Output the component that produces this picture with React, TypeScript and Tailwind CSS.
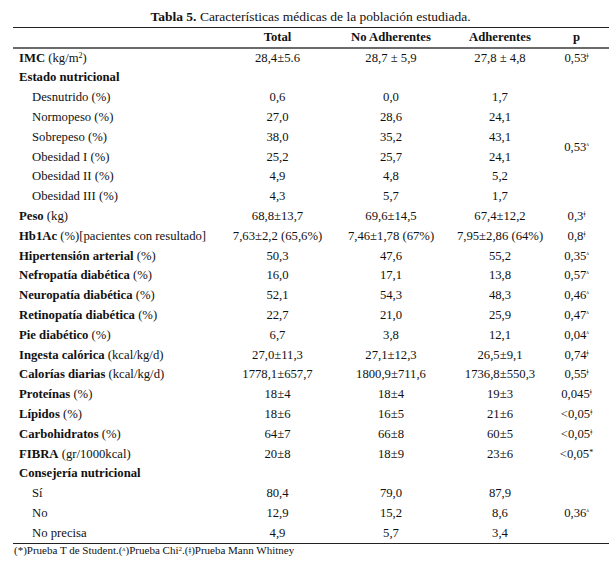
const MW = "ǂ";
const CHI = "ᶺ";

type Row = {
  label: React.ReactNode;
  indent?: boolean;
  total?: string;
  no?: string;
  adh?: string;
  p?: React.ReactNode;
  span?: number;
  skipP?: boolean;
};

function P({ v, m }: { v: string; m: string }) {
  return (
    <span>
      {v}
      <span className="text-[8px] relative top-[-3px]">{m}</span>
    </span>
  );
}

function L({ b, n }: { b: string; n?: string }) {
  return (
    <>
      <span className="font-bold">{b}</span>
      {n ? <span> {n}</span> : null}
    </>
  );
}

const rows: Row[] = [
  {
    label: (
      <>
        <span className="font-bold">IMC</span> (kg/m<span className="text-[8px] relative top-[-4px]">2</span>)
      </>
    ),
    total: "28,4±5.6",
    no: "28,7 ± 5,9",
    adh: "27,8 ± 4,8",
    p: <P v="0,53" m={MW} />,
  },
  { label: <L b="Estado nutricional" /> },
  { label: "Desnutrido (%)", indent: true, total: "0,6", no: "0,0", adh: "1,7", p: <P v="0,53" m={CHI} />, span: 6 },
  { label: "Normopeso (%)", indent: true, total: "27,0", no: "28,6", adh: "24,1", skipP: true },
  { label: "Sobrepeso (%)", indent: true, total: "38,0", no: "35,2", adh: "43,1", skipP: true },
  { label: "Obesidad I (%)", indent: true, total: "25,2", no: "25,7", adh: "24,1", skipP: true },
  { label: "Obesidad II (%)", indent: true, total: "4,9", no: "4,8", adh: "5,2", skipP: true },
  { label: "Obesidad III (%)", indent: true, total: "4,3", no: "5,7", adh: "1,7", skipP: true },
  { label: <L b="Peso" n="(kg)" />, total: "68,8±13,7", no: "69,6±14,5", adh: "67,4±12,2", p: <P v="0,3" m={MW} /> },
  {
    label: (
      <>
        <span className="font-bold">Hb1Ac</span> (%)[pacientes con resultado]
      </>
    ),
    total: "7,63±2,2 (65,6%)",
    no: "7,46±1,78 (67%)",
    adh: "7,95±2,86 (64%)",
    p: <P v="0,8" m={MW} />,
  },
  { label: <L b="Hipertensión arterial" n="(%)" />, total: "50,3", no: "47,6", adh: "55,2", p: <P v="0,35" m={CHI} /> },
  { label: <L b="Nefropatía diabética" n="(%)" />, total: "16,0", no: "17,1", adh: "13,8", p: <P v="0,57" m={CHI} /> },
  { label: <L b="Neuropatía diabética" n="(%)" />, total: "52,1", no: "54,3", adh: "48,3", p: <P v="0,46" m={CHI} /> },
  { label: <L b="Retinopatía diabética" n="(%)" />, total: "22,7", no: "21,0", adh: "25,9", p: <P v="0,47" m={CHI} /> },
  { label: <L b="Pie diabético" n="(%)" />, total: "6,7", no: "3,8", adh: "12,1", p: <P v="0,04" m={CHI} /> },
  { label: <L b="Ingesta calórica" n="(kcal/kg/d)" />, total: "27,0±11,3", no: "27,1±12,3", adh: "26,5±9,1", p: <P v="0,74" m={MW} /> },
  { label: <L b="Calorías diarias" n="(kcal/kg/d)" />, total: "1778,1±657,7", no: "1800,9±711,6", adh: "1736,8±550,3", p: <P v="0,55" m={MW} /> },
  { label: <L b="Proteínas" n="(%)" />, total: "18±4", no: "18±4", adh: "19±3", p: <P v="0,045" m={MW} /> },
  { label: <L b="Lípidos" n="(%)" />, total: "18±6", no: "16±5", adh: "21±6", p: <P v="<0,05" m={MW} /> },
  { label: <L b="Carbohidratos" n="(%)" />, total: "64±7", no: "66±8", adh: "60±5", p: <P v="<0,05" m={MW} /> },
  { label: <L b="FIBRA" n="(gr/1000kcal)" />, total: "20±8", no: "18±9", adh: "23±6", p: <P v="<0,05" m="*" /> },
  { label: <L b="Consejería nutricional" /> },
  { label: "Sí", indent: true, total: "80,4", no: "79,0", adh: "87,9", p: <P v="0,36" m={CHI} />, span: 3 },
  { label: "No", indent: true, total: "12,9", no: "15,2", adh: "8,6", skipP: true },
  { label: "No precisa", indent: true, total: "4,9", no: "5,7", adh: "3,4", skipP: true },
];

export default function App() {
  return (
    <div className="w-[615px] h-[571px] bg-white text-[#111] pt-[9px] font-['Liberation_Serif','Times_New_Roman',serif]">
      <div className="text-center text-[13.5px] leading-[18px] pl-[6px] -mt-[1px] mb-[1px]">
        <span className="font-bold">Tabla 5.</span> Características médicas de la población estudiada.
      </div>
      <div className="ml-[13px] w-[596px]">
        <table className="w-full table-fixed border-collapse text-[12.7px]">
          <colgroup>
            <col className="w-[212px]" />
            <col className="w-[105px]" />
            <col className="w-[122px]" />
            <col className="w-[96px]" />
            <col className="w-[61px]" />
          </colgroup>
          <thead>
            <tr className="h-[20px] border-t border-[#222] border-b-2 border-b-[#6b6b6b]">
              <th />
              <th className="text-center font-bold">Total</th>
              <th className="text-center font-bold">No Adherentes</th>
              <th className="text-center font-bold">Adherentes</th>
              <th className="text-center font-bold pr-[4px]">p</th>
            </tr>
          </thead>
          <tbody>
            {rows.map((r, i) => (
              <tr key={i} className={"h-[19.8px] " + (i === rows.length - 1 ? "border-b border-[#222]" : "")}>
                <td className={"p-0 whitespace-nowrap " + (r.indent ? "pl-[19px]" : "pl-[6px]")}>{r.label}</td>
                <td className="p-0 text-center whitespace-nowrap">{r.total}</td>
                <td className="p-0 text-center whitespace-nowrap">{r.no}</td>
                <td className="p-0 text-center whitespace-nowrap">{r.adh}</td>
                {r.skipP ? null : (
                  <td rowSpan={r.span ?? 1} className="p-0 text-center whitespace-nowrap pr-[4px]">
                    {r.p}
                  </td>
                )}
              </tr>
            ))}
          </tbody>
        </table>
        <div className="text-[11px] leading-[13px] pl-[1px]">
          (*)Prueba T de Student.({CHI})Prueba Chi<span className="text-[7px] relative top-[-3px]">2</span>.({MW})Prueba Mann Whitney
        </div>
      </div>
    </div>
  );
}
